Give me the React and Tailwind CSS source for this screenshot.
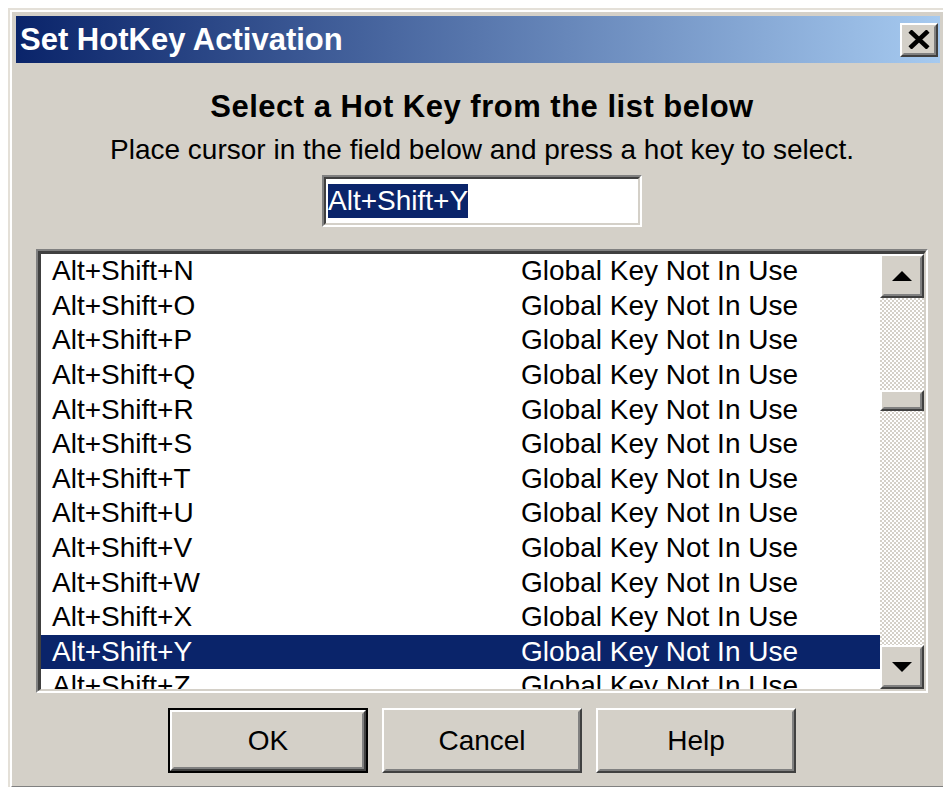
import React from "react";

const keys = ["N", "O", "P", "Q", "R", "S", "T", "U", "V", "W", "X", "Y", "Z"];

// classic raised bevel used for buttons and scrollbar parts
const Raised = ({ className = "", children }) => (
  <div
    className={`border-[2px] border-t-white border-l-white border-r-[#404040] border-b-[#404040] ${className}`}
  >
    <div className="w-full h-full border-[2px] border-t-[#d4d0c8] border-l-[#d4d0c8] border-r-[#808080] border-b-[#808080] bg-[#d4d0c8] flex items-center justify-center">
      {children}
    </div>
  </div>
);

const Arrow = ({ down }) => (
  <svg width="20" height="10" viewBox="0 0 20 10">
    <polygon points={down ? "0,0 20,0 10,10" : "0,10 20,10 10,0"} fill="#000" />
  </svg>
);

const DialogButton = ({ label, isDefault }) => {
  const btn = (
    <Raised className="w-full h-full">
      <span className="text-[28px] leading-[28px] text-black">{label}</span>
    </Raised>
  );
  return (
    <div className={`w-[200px] h-[65px] ${isDefault ? "border-[2px] border-black" : ""}`}>
      {btn}
    </div>
  );
};

const HotKeyDialog = () => {
  const selected = "Y";

  return (
    <div className="w-[940px] h-[782px] border-[2px] border-t-[#e4e0d8] border-l-[#e4e0d8] border-r-[#404040] border-b-[#404040]">
      <div className="w-full h-full border-[2px] border-t-white border-l-white border-r-[#808080] border-b-[#808080] bg-[#d4d0c8] p-[4px] flex flex-col">
        {/* title bar */}
        <div className="h-[47px] shrink-0 flex items-center justify-between bg-[linear-gradient(to_right,#0a246a,#a6caf0)] pl-[4px] pr-[2px]">
          <span className="text-white font-bold text-[31px] leading-[31px]">Set HotKey Activation</span>
          <Raised className="w-[38px] h-[34px]">
            <svg width="22" height="19" viewBox="0 0 22 19">
              <path d="M2 1 L20 18 M20 1 L2 18" stroke="#000" strokeWidth="4.5" />
            </svg>
          </Raised>
        </div>

        <div className="pl-[8px] flex flex-col items-center">
          <div className="mt-[28px] font-bold text-[31px] leading-[31px] tracking-[0.5px] text-black">
            Select a Hot Key from the list below
          </div>
          <div className="mt-[14px] text-[28px] leading-[28px] text-black">
            Place cursor in the field below and press a hot key to select.
          </div>
          {/* hot key field */}
          <div className="mt-[11px] w-[320px] h-[52px] border-[2px] border-t-[#808080] border-l-[#808080] border-r-white border-b-white">
            <div className="w-full h-full border-[2px] border-t-[#404040] border-l-[#404040] border-r-[#d4d0c8] border-b-[#d4d0c8] bg-white flex items-center pl-[2px]">
              <span className="bg-[#0a246a] text-white text-[28px] leading-[34px]">Alt+Shift+Y</span>
            </div>
          </div>
        </div>

        {/* key list */}
        <div className="mt-[22px] ml-[20px] w-[892px] h-[444px] shrink-0 border-[2px] border-t-[#808080] border-l-[#808080] border-r-white border-b-white">
          <div className="w-full h-full border-[2px] border-l-[3px] border-t-[3px] border-t-[#404040] border-l-[#404040] border-r-[#d4d0c8] border-b-[#d4d0c8] bg-white flex">
            <div className="flex-1 overflow-hidden">
              {keys.map((k) => (
                <div
                  key={k}
                  className={`h-[34.6px] flex items-center text-[28px] leading-[28px] ${
                    k === selected ? "bg-[#0a246a] text-white" : "text-black"
                  }`}
                >
                  <span className="w-[480px] pl-[11px] shrink-0">Alt+Shift+{k}</span>
                  <span>Global Key Not In Use</span>
                </div>
              ))}
            </div>
            {/* scrollbar */}
            <div className="w-[44px] flex flex-col bg-[image:repeating-conic-gradient(#d4d0c8_0%_25%,#ffffff_0%_50%)] bg-[length:4px_4px]">
              <Raised className="w-[44px] h-[44px] shrink-0">
                <Arrow />
              </Raised>
              <div className="flex-1 pt-[92px]">
                <Raised className="w-[44px] h-[21px]" />
              </div>
              <Raised className="w-[44px] h-[44px] shrink-0">
                <Arrow down />
              </Raised>
            </div>
          </div>
        </div>

        {/* buttons */}
        <div className="mt-[15px] pl-[8px] flex justify-center gap-[14px]">
          <DialogButton label="OK" isDefault />
          <DialogButton label="Cancel" />
          <DialogButton label="Help" />
        </div>
      </div>
    </div>
  );
};

export default function App() {
  return (
    <div className="w-screen h-screen overflow-hidden bg-white pt-[8px] pl-[8px] font-['Liberation_Sans',Arial,sans-serif]">
      <HotKeyDialog />
    </div>
  );
}
